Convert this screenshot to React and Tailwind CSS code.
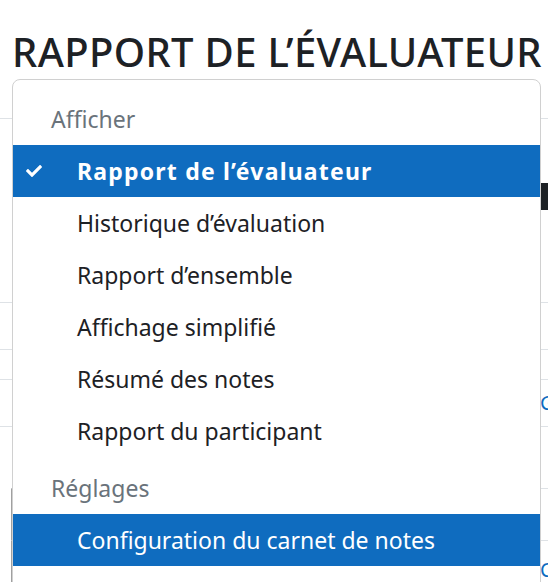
const FONT = { fontFamily: '"Noto Sans", "Open Sans", sans-serif' };

const CheckIcon = () => (
  <svg viewBox="0 0 512 512" className="w-4 h-4 fill-white">
    <path d="M173.898 439.404l-166.4-166.4c-9.997-9.997-9.997-26.206 0-36.204l36.203-36.204c9.997-9.998 26.207-9.998 36.204 0L192 312.69 432.095 72.596c9.997-9.997 26.207-9.997 36.204 0l36.203 36.204c9.997 9.997 9.997 26.206 0 36.204l-294.4 294.401c-9.998 9.997-26.207 9.997-36.204-.001z" />
  </svg>
);

const Header = ({ children, className = "" }) => (
  <div className={`h-[52px] flex items-center pl-[38px] text-[23px] text-[#6a737b] ${className}`}>
    {children}
  </div>
);

const Item = ({ children, active, bold, checked }) => (
  <div
    className={`relative h-[52px] flex items-center pl-[64px] text-[23px] whitespace-nowrap ${
      active ? "bg-[#0f6cbf] text-white" : "text-[#1d2125]"
    } ${bold ? "font-bold tracking-[1.2px]" : ""}`}
  >
    {checked && (
      <span className="absolute left-[13px] top-[18px]">
        <CheckIcon />
      </span>
    )}
    {children}
  </div>
);

const App = () => {
  return (
    <div className="relative w-[548px] h-[582px] overflow-hidden bg-white" style={FONT}>
      <h2 className="pt-[28px] pl-[12px] text-[40px] leading-[48px] font-medium tracking-[0.35px] text-[#1d2125] whitespace-nowrap">
        RAPPORT DE L’ÉVALUATEUR
      </h2>

      {/* page content behind the menu */}
      <div className="mt-[42px] border-t border-[#dee2e6]">
        <div className="h-[64px]" />
        <div className="h-[27px] ml-[540px] bg-[#1d2125]" />
        <div className="h-[92px]" />
        <div className="h-[47px] border-t border-[#dee2e6]" />
        <div className="h-[30px] border-t border-[#dee2e6]" />
        <div className="h-[47px] border-t border-[#dee2e6] pl-[540px] flex items-center text-[#0f6cbf] text-[20px]">
          G
        </div>
        <div className="h-[62px] border-t border-[#dee2e6]" />
        <div className="h-[52px] border-t border-[#dee2e6] ml-[11px] border-l border-l-[#a0a0a0]" />
        <div className="h-[52px] border-t border-[#dee2e6] ml-[11px] border-l border-l-[#a0a0a0] pl-[528px] pt-[19px] text-[#0f6cbf] text-[20px] leading-none">
          C
        </div>
      </div>

      {/* dropdown menu */}
      <div className="absolute top-[79px] left-[12px] w-[529px] h-[600px] bg-white border border-[#d0d0d0] rounded-lg overflow-hidden pt-[13px]">
        <Header>Afficher</Header>
        <Item active bold checked>
          Rapport de l’évaluateur
        </Item>
        <Item>Historique d’évaluation</Item>
        <Item>Rapport d’ensemble</Item>
        <Item>Affichage simplifié</Item>
        <Item>Résumé des notes</Item>
        <Item>Rapport du participant</Item>
        <Header className="mt-[5px]">Réglages</Header>
        <Item active>Configuration du carnet de notes</Item>
        <Item>Réglages du carnet de notes du cours</Item>
      </div>
    </div>
  );
};

export default App;
